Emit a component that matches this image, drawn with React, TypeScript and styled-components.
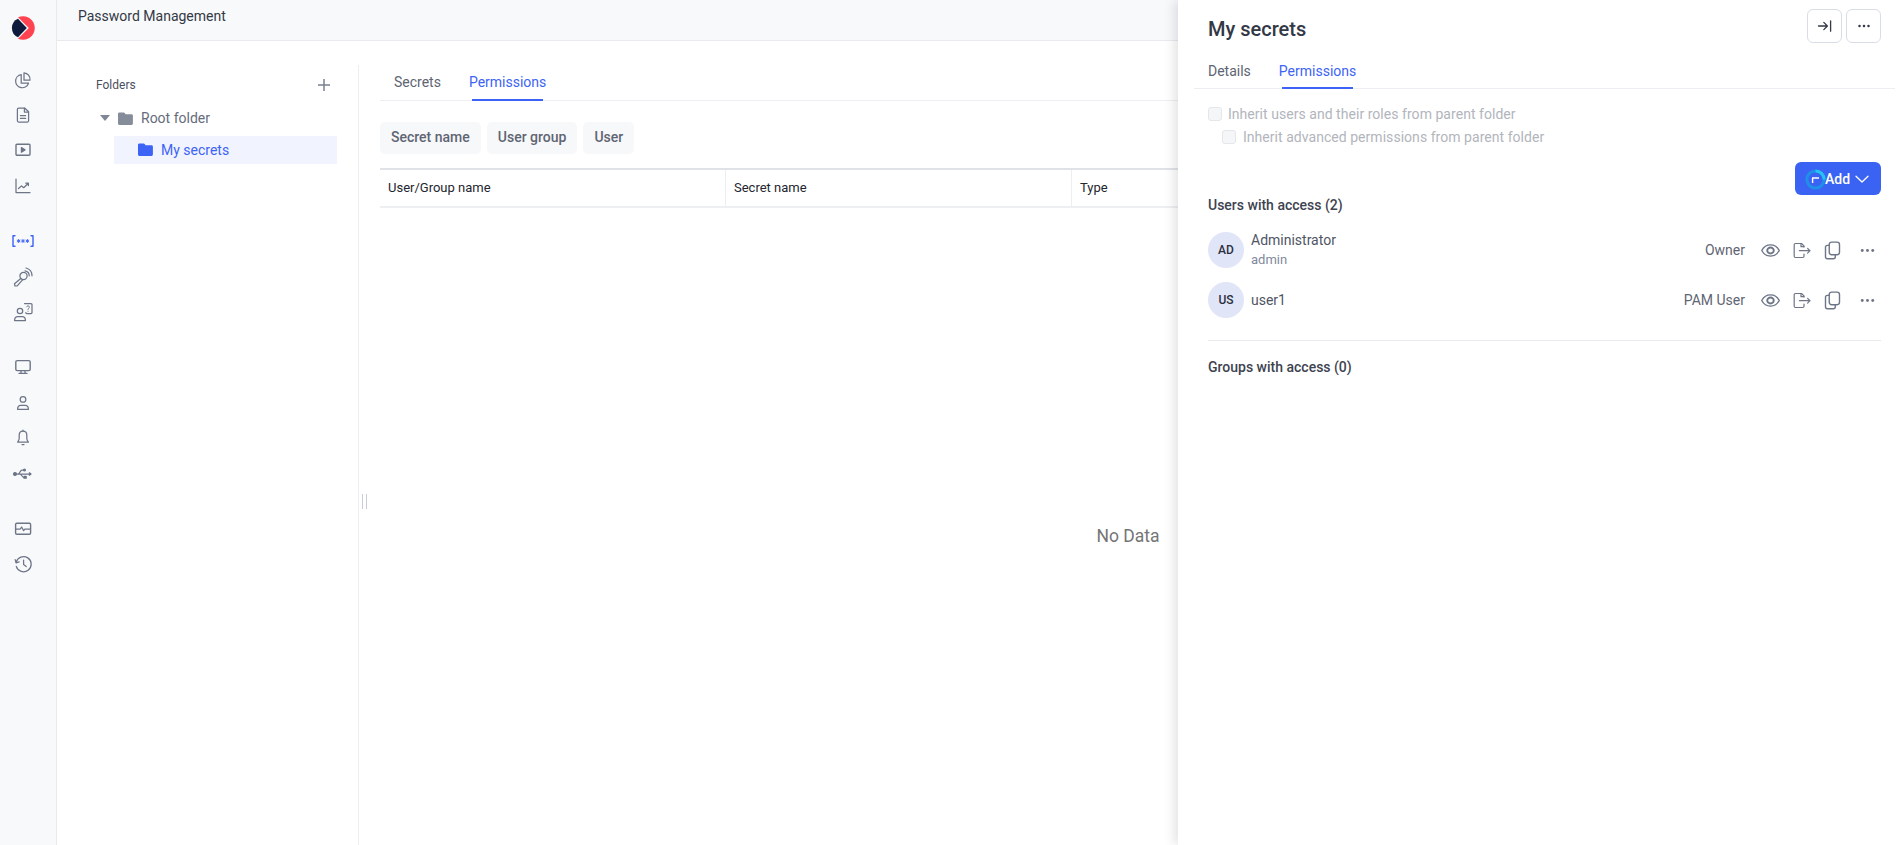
import React from "react";
import styled, { createGlobalStyle } from "styled-components";

const Global = createGlobalStyle`
  html, body { margin: 0; padding: 0; height: 100%; background: #fff; }
  body { font-family: Roboto, "Liberation Sans", sans-serif; overflow: hidden; }
  #root { height: 100%; }
  * { box-sizing: border-box; }
`;

const Page = styled.div`
  position: relative;
  display: flex;
  width: 1899px;
  height: 845px;
  overflow: hidden;
  background: #fff;
`;

const Sidebar = styled.nav`
  flex: 0 0 57px;
  display: flex;
  flex-direction: column;
  align-items: center;
  padding: 16px 11px 0 0;
  background: #f8f9fb;
  border-right: 1px solid #e8eaee;
`;

const Logo = styled.svg`
  width: 24px;
  height: 24px;
  margin-bottom: 22px;
`;

const NavGroup = styled.div`
  display: flex;
  flex-direction: column;
  align-items: center;
  width: 100%;
  margin-bottom: 20px;
`;

const NavSlot = styled.div<{ $active?: boolean }>`
  height: 35.4px;
  width: 100%;
  display: flex;
  align-items: center;
  justify-content: center;
  color: ${(p) => (p.$active ? "#3d63f6" : "#6d7587")};
`;

const NavIcon = styled.svg`
  width: 20px;
  height: 20px;
  fill: none;
  stroke: currentColor;
  stroke-width: 1.25;
  stroke-linecap: round;
  stroke-linejoin: round;
`;

const WideNavIcon = styled(NavIcon)`
  width: 24px;
`;

const Main = styled.div`
  flex: 1;
  display: flex;
  flex-direction: column;
  min-width: 0;
`;

const Header = styled.header`
  flex: 0 0 41px;
  display: flex;
  align-items: flex-start;
  padding: 8px 0 0 21px;
  background: #f8f9fb;
  border-bottom: 1px solid #e8eaee;
  font-size: 14px;
  line-height: 16px;
  color: #333845;
`;

const Body = styled.div`
  flex: 1;
  display: flex;
  padding-top: 24px;
  min-height: 0;
`;

const FolderPanel = styled.aside`
  flex: 0 0 302px;
  padding: 12px 21px 0 39px;
  border-right: 1px solid #eceef1;
`;

const FolderHead = styled.div`
  display: flex;
  align-items: center;
  justify-content: space-between;
  height: 16px;
  padding-right: 7px;
  font-size: 12px;
  color: #4a5060;
`;

const PlusIcon = styled.svg`
  width: 14px;
  height: 14px;
  stroke: #7a8190;
  stroke-width: 1.5;
  fill: none;
  margin-right: -1px;
`;

const Tree = styled.div`
  margin-top: 11px;
`;

const TreeRow = styled.div<{ $selected?: boolean }>`
  display: flex;
  align-items: center;
  height: 28px;
  margin-left: ${(p) => (p.$selected ? "18px" : "4px")};
  padding-left: ${(p) => (p.$selected ? "24px" : "0")};
  padding-bottom: ${(p) => (p.$selected ? "1px" : "0")};
  margin-bottom: ${(p) => (p.$selected ? "0" : "4px")};
  background: ${(p) => (p.$selected ? "#f1f4fe" : "transparent")};
  color: ${(p) => (p.$selected ? "#3d63f6" : "#656c7b")};
  font-size: 14px;
`;

const Caret = styled.span`
  width: 0;
  height: 0;
  border-left: 5px solid transparent;
  border-right: 5px solid transparent;
  border-top: 6px solid #808796;
  margin-right: 8px;
`;

const FolderIcon = styled.svg<{ $tone: string }>`
  width: 15px;
  height: 13px;
  margin-right: 8px;
  fill: ${(p) => p.$tone};
`;

const Content = styled.section`
  position: relative;
  flex: 1;
  display: flex;
  flex-direction: column;
  padding: 0 23px 0 21px;
  min-width: 0;
`;

const Handle = styled.div`
  position: absolute;
  left: 3px;
  top: 429px;
  width: 5px;
  height: 15px;
  border-left: 1px solid #c9ced6;
  border-right: 1px solid #c9ced6;
`;

const TabBar = styled.div<{ $gap: number; $pad: number }>`
  display: flex;
  gap: ${(p) => p.$gap}px;
  padding-left: ${(p) => p.$pad}px;
  border-bottom: 1.5px solid #eceef2;
`;

const Tab = styled.div<{ $active?: boolean }>`
  position: relative;
  font-size: 14px;
  line-height: 16px;
  color: ${(p) => (p.$active ? "#3d63f6" : "#5d6472")};
  &::after {
    content: "";
    position: absolute;
    left: 3px;
    right: 3px;
    bottom: -1px;
    height: 2px;
    background: ${(p) => (p.$active ? "#3d63f6" : "transparent")};
  }
`;

const MainTabs = styled(TabBar)`
  height: 36px;
  padding-top: 9px;
`;

const Filters = styled.div`
  display: flex;
  gap: 6px;
  margin-top: 21px;
`;

const Chip = styled.div`
  height: 32px;
  padding: 0 11px 2px;
  display: flex;
  align-items: center;
  background: #f7f8fa;
  border-radius: 5px;
  font-size: 14px;
  font-weight: 500;
  color: #5f6573;
`;

const TableHead = styled.div`
  display: grid;
  grid-template-columns: 345px 346px 1fr;
  height: 40px;
  margin-top: 14px;
  border-top: 2px solid #dfe2e7;
  border-bottom: 2px solid #edeff2;
`;

const HeadCell = styled.div`
  display: flex;
  align-items: center;
  padding: 0 0 2px 8px;
  font-size: 13px;
  color: #23262e;
  & + & {
    border-left: 1px solid #eceef1;
  }
`;

const Empty = styled.div`
  flex: 1;
  display: flex;
  align-items: center;
  justify-content: center;
  padding-top: 19px;
  font-size: 17.5px;
  color: #757575;
`;

const Drawer = styled.aside`
  position: absolute;
  top: 0;
  right: 0;
  bottom: 0;
  width: 721px;
  display: flex;
  flex-direction: column;
  padding: 9px 4px 0 16px;
  background: #fff;
  box-shadow: -4px 0 10px rgba(30, 35, 50, 0.12);
`;

const DrawerTop = styled.div`
  display: flex;
  justify-content: space-between;
  align-items: flex-start;
  height: 47px;
  padding: 0 14px;
`;

const DrawerTitle = styled.h1`
  margin: 8px 0 0;
  font-size: 20px;
  line-height: 24px;
  font-weight: 500;
  color: #333845;
`;

const SquareButtons = styled.div`
  display: flex;
  gap: 4px;
`;

const SquareButton = styled.div`
  width: 35px;
  height: 34px;
  display: flex;
  align-items: center;
  justify-content: center;
  border: 1px solid #d9dde6;
  border-radius: 6px;
  background: #fff;
  color: #333845;
`;

const ActionIcon = styled.svg`
  width: 18px;
  height: 18px;
  fill: none;
  stroke: currentColor;
  stroke-width: 1.3;
  stroke-linecap: round;
  stroke-linejoin: round;
`;

const RowIcon = styled(ActionIcon)`
  width: 21px;
  height: 21px;
  stroke-width: 1.2;
`;

const DrawerTabs = styled(TabBar)`
  height: 33px;
  border-bottom-width: 1px;
  padding-top: 7px;
`;

const DrawerBody = styled.div`
  flex: 1;
  display: flex;
  flex-direction: column;
  padding: 16px 14px 0;
`;

const CheckRow = styled.label<{ $indent?: boolean }>`
  display: flex;
  align-items: center;
  gap: ${(p) => (p.$indent ? "8px" : "7px")};
  height: 18px;
  margin-left: ${(p) => (p.$indent ? "14px" : "0")};
  margin-top: ${(p) => (p.$indent ? "5px" : "0")};
  font-size: 14px;
  letter-spacing: 0.04px;
  color: #b2b5bc;
`;

const CheckBox = styled.span`
  width: 14px;
  height: 14px;
  margin-right: -1px;
  background: #f5f6f8;
  border: 1px solid #e4e6eb;
  border-radius: 3px;
`;

const AddRow = styled.div`
  display: flex;
  justify-content: flex-end;
  margin-top: 16px;
`;

const AddButton = styled.div`
  position: relative;
  width: 86px;
  height: 33px;
  display: flex;
  align-items: center;
  padding-left: 30px;
  gap: 3px;
  background: #3b63f3;
  border-radius: 6px;
  color: #fff;
  font-size: 14px;
  font-weight: 500;
`;

const BusyMark = styled.svg`
  position: absolute;
  left: 10px;
  top: 7px;
  width: 21px;
  height: 21px;
`;

const SectionTitle = styled.div`
  font-size: 14px;
  line-height: 16px;
  font-weight: 500;
  color: #3e4350;
`;

const UsersTitle = styled(SectionTitle)`
  margin-top: 2px;
`;

const UserList = styled.div`
  display: flex;
  flex-direction: column;
  gap: 14px;
  margin-top: 19px;
  padding-bottom: 22px;
  border-bottom: 1px solid #e9ebef;
`;

const UserRow = styled.div`
  display: flex;
  align-items: center;
  height: 36px;
`;

const Avatar = styled.div`
  flex: 0 0 36px;
  height: 36px;
  display: flex;
  align-items: center;
  justify-content: center;
  border-radius: 50%;
  background: #e1e5f8;
  color: #2b3040;
  font-size: 12px;
  font-weight: 500;
`;

const UserText = styled.div`
  flex: 1;
  margin-left: 7px;
  display: flex;
  flex-direction: column;
`;

const UserName = styled.div`
  font-size: 14px;
  line-height: 17px;
  color: #4f5564;
`;

const UserLogin = styled.div`
  margin-top: 3px;
  font-size: 13px;
  line-height: 16px;
  color: #818a9c;
`;

const Role = styled.div`
  font-size: 14px;
  color: #5f6573;
  margin-right: 2px;
`;

const RowActions = styled.div`
  display: flex;
  align-items: center;
  color: #6d7587;
`;

const RowAction = styled.div<{ $w: number }>`
  width: ${(p) => p.$w}px;
  display: flex;
  justify-content: center;
`;

const GroupsTitle = styled(SectionTitle)`
  margin-top: 18px;
`;

const Nav = ({ d, active }: { d: React.ReactNode; active?: boolean }) => (
  <NavSlot $active={active}>
    <NavIcon viewBox="0 0 20 20">{d}</NavIcon>
  </NavSlot>
);

const Folder = ({ tone }: { tone: string }) => (
  <FolderIcon $tone={tone} viewBox="0 0 15 13">
    <path d="M1.4 0.5h4.2c.5 0 .8.2 1.1.6l.8 1.2h6c.8 0 1.4.6 1.4 1.4v7.9c0 .8-.6 1.4-1.4 1.4H1.4c-.8 0-1.4-.6-1.4-1.4V1.9C0 1.1.6.5 1.4.5z" />
  </FolderIcon>
);

const eyeArt = (
  <>
    <path d="M1.5 9C3.2 5.8 5.9 4.2 9 4.2s5.8 1.6 7.5 4.8c-1.7 3.2-4.4 4.8-7.5 4.8S3.2 12.2 1.5 9z" />
    <ellipse cx="9" cy="9" rx="2.8" ry="2.6" strokeWidth="1.6" />
  </>
);

const exportArt = (
  <>
    <path d="M11 5.5V4.4L8.5 2H2.4C1.7 2 1.2 2.5 1.2 3.2v11.6c0 .7.5 1.2 1.2 1.2h7.4c.7 0 1.2-.5 1.2-1.2v-2.3" />
    <path d="M8 2.2v3h3" />
    <path d="M6.4 9.2H17M14.6 6.8 17 9.2l-2.4 2.4" />
  </>
);

const copyArt = (
  <>
    <rect x="6.2" y="1.8" width="8.8" height="10.8" rx="2" />
    <path d="M6 4.6H4.6C3.6 4.6 3 5.3 3 6.2v8.2c0 .9.7 1.7 1.7 1.7h5c1 0 1.7-.7 1.7-1.7v-1.6" />
  </>
);

const dotsArt = (
  <>
    <circle cx="4.5" cy="9" r="1.25" fill="currentColor" stroke="none" />
    <circle cx="9" cy="9" r="1.25" fill="currentColor" stroke="none" />
    <circle cx="13.5" cy="9" r="1.25" fill="currentColor" stroke="none" />
  </>
);

const Star = ({ x }: { x: number }) => (
  <path
    d={`M${x} 8.4v3.2M${x - 1.4} 9.2l2.8 1.6M${x - 1.4} 10.8l2.8-1.6`}
    strokeWidth="0.9"
  />
);

const users = [
  { initials: "AD", name: "Administrator", login: "admin", role: "Owner" },
  { initials: "US", name: "user1", login: "", role: "PAM User" },
];

export default function App() {
  return (
    <Page>
      <Global />
      <Sidebar>
        <Logo viewBox="0 0 24 24">
          <path d="M7 1.3A11.8 11.8 0 1 1 7 22.7L17.8 12Z" fill="#ff4351" />
          <path d="M7 2.8 15.8 12 7 21.2A10 10 0 0 1 7 2.8Z" fill="#0f1b3d" />
        </Logo>
        <NavGroup>
          <Nav d={<><path d="M8.2 4.6a6.6 6.6 0 1 0 7.3 8.6H8.2V4.6Z" /><path d="M11 2.8a6.6 6.6 0 0 1 6 7.4h-6V2.8Z" /></>} />
          <Nav d={<><path d="M11.6 3H5.6C4.9 3 4.4 3.5 4.4 4.2v11.6c0 .7.5 1.2 1.2 1.2h8.8c.7 0 1.2-.5 1.2-1.2V6.8L11.6 3Z" /><path d="M11.4 3.2v3.8h4" /><path d="M7.4 10.6h5.2M7.4 13.4h5.2" /></>} />
          <Nav d={<><rect x="3" y="4.2" width="14" height="11" rx="1" strokeWidth="1.4" /><path d="M8.4 7.6v4.6l3.6-2.3z" fill="currentColor" /></>} />
          <Nav d={<><path d="M3 3v13.5h14" /><path d="M5.5 12.5l3-2.6 2.2 1.8 4.6-4.4M12.8 7.2h2.6v2.4" /></>} />
        </NavGroup>
        <NavGroup>
          <NavSlot $active>
            <WideNavIcon viewBox="0 0 24 20">
              <path d="M4 4.8H2v10.4h2M20 4.8h2v10.4h-2" strokeWidth="1.4" />
              <Star x={7.6} />
              <Star x={12} />
              <Star x={16.4} />
            </WideNavIcon>
          </NavSlot>
          <Nav d={<><circle cx="10.5" cy="9" r="3.6" /><path d="M7.8 11.5 1.5 16.8l.5 2.2 2.2-.2 5.6-6.2" /><path d="M12 3.8a5 5 0 0 1 4.2 5M13 1a8 8 0 0 1 6 7.8" /></>} />
          <Nav d={<><circle cx="7" cy="9" r="2.7" /><path d="M1.6 18.6c0-2.6 1.4-4 3-4h4.8c1.6 0 3 1.4 3 4Z" /><path d="M11.5 1.5h6.5a1 1 0 0 1 1 1v8a1 1 0 0 1-1 1h-4.2a1 1 0 0 1-1-1" /><path d="M13.6 4.8c.5-1.4 2.8-1.2 2.8.3 0 1-1.3 1.1-1.4 2.3M15 9.2v.1" strokeWidth="1" /></>} />
        </NavGroup>
        <NavGroup>
          <Nav d={<><rect x="2.8" y="3.6" width="14.4" height="10" rx="1.4" strokeWidth="1.4" /><path d="M8 13.6v2.6M12 13.6v2.6M6 16.4h8" /></>} />
          <Nav d={<><circle cx="10" cy="6.4" r="2.8" /><path d="M4.6 16.4c0-2.6 1.4-4 3.2-4h4.4c1.8 0 3.2 1.4 3.2 4Z" /></>} />
          <Nav d={<><path d="M10 3.2c-2.4 0-3.8 1.8-3.8 4v3.2c0 1.4-.7 2.4-1.6 3.6h10.8c-.9-1.2-1.6-2.2-1.6-3.6V7.2c0-2.2-1.4-4-3.8-4Z" /><path d="M10 2v1.2M9 16.6h2" /></>} />
          <NavSlot>
            <NavIcon viewBox="0 0 20 20">
              <circle cx="2" cy="10" r="1.4" fill="currentColor" />
              <path d="M2 10h15M5 10c2 0 2-4 4-4h1.6M7 10c1.6 0 1.8 3.4 3.8 3.4" />
              <circle cx="11.5" cy="6" r=".9" fill="currentColor" />
              <rect x="11" y="12.4" width="2.2" height="1.8" fill="currentColor" />
              <path d="M16.4 8.8 18 10l-1.6 1.2z" fill="currentColor" />
            </NavIcon>
          </NavSlot>
        </NavGroup>
        <NavGroup>
          <Nav d={<><rect x="2.6" y="4.2" width="15" height="11" rx="1.2" strokeWidth="1.4" /><path d="M2.8 10h4.4l1.4-2 2 3.6 1.2-1.6h5.6" /></>} />
          <Nav d={<><path d="M3.2 8.4a7.6 7.6 0 1 1 .1 4" /><path d="M2.2 5.6l.9 3.2 3-.9" /><path d="M10.6 6v4.6l2.6 2" /></>} />
        </NavGroup>
      </Sidebar>
      <Main>
        <Header>Password Management</Header>
        <Body>
          <FolderPanel>
            <FolderHead>
              Folders
              <PlusIcon viewBox="0 0 14 14">
                <path d="M7 1v12M1 7h12" />
              </PlusIcon>
            </FolderHead>
            <Tree>
              <TreeRow>
                <Caret />
                <Folder tone="#858c9a" />
                Root folder
              </TreeRow>
              <TreeRow $selected>
                <Folder tone="#3d63f6" />
                My secrets
              </TreeRow>
            </Tree>
          </FolderPanel>
          <Content>
            <Handle />
            <MainTabs $gap={28} $pad={14}>
              <Tab>Secrets</Tab>
              <Tab $active>Permissions</Tab>
            </MainTabs>
            <Filters>
              <Chip>Secret name</Chip>
              <Chip>User group</Chip>
              <Chip>User</Chip>
            </Filters>
            <TableHead>
              <HeadCell>User/Group name</HeadCell>
              <HeadCell>Secret name</HeadCell>
              <HeadCell>Type</HeadCell>
            </TableHead>
            <Empty>No Data</Empty>
          </Content>
        </Body>
      </Main>
      <Drawer>
        <DrawerTop>
          <DrawerTitle>My secrets</DrawerTitle>
          <SquareButtons>
            <SquareButton>
              <ActionIcon viewBox="0 0 18 18" strokeWidth="1.8">
                <path d="M2.5 9h8.5M7.8 5.4 11.4 9l-3.6 3.6M14.6 3.8v10.4" />
              </ActionIcon>
            </SquareButton>
            <SquareButton>
              <ActionIcon viewBox="0 0 18 18">{dotsArt}</ActionIcon>
            </SquareButton>
          </SquareButtons>
        </DrawerTop>
        <DrawerTabs $gap={28} $pad={14}>
          <Tab>Details</Tab>
          <Tab $active>Permissions</Tab>
        </DrawerTabs>
        <DrawerBody>
          <CheckRow>
            <CheckBox />
            Inherit users and their roles from parent folder
          </CheckRow>
          <CheckRow $indent>
            <CheckBox />
            Inherit advanced permissions from parent folder
          </CheckRow>
          <AddRow>
            <AddButton>
              <BusyMark viewBox="0 0 21 21">
                <circle cx="10.5" cy="10.5" r="8.6" fill="none" stroke="#1f8fe8" strokeWidth="3" />
                <path d="M10.5 1.9a8.6 8.6 0 0 1 8.6 8.6" fill="none" stroke="#25c3f0" strokeWidth="3" />
                <path d="M7 9h7M7.6 9v5" stroke="#fff" strokeWidth="1.4" fill="none" />
              </BusyMark>
              Add
              <ActionIcon viewBox="0 0 18 18" strokeWidth="1.5">
                <path d="M3 6.2 9 12l6-5.8" />
              </ActionIcon>
            </AddButton>
          </AddRow>
          <UsersTitle>Users with access (2)</UsersTitle>
          <UserList>
            {users.map((u) => (
              <UserRow key={u.initials}>
                <Avatar>{u.initials}</Avatar>
                <UserText>
                  <UserName>{u.name}</UserName>
                  {u.login && <UserLogin>{u.login}</UserLogin>}
                </UserText>
                <Role>{u.role}</Role>
                <RowActions>
                  <RowAction $w={46}><RowIcon viewBox="0 0 18 18">{eyeArt}</RowIcon></RowAction>
                  <RowAction $w={18}><RowIcon viewBox="0 0 18 18">{exportArt}</RowIcon></RowAction>
                  <RowAction $w={42}><RowIcon viewBox="0 0 18 18">{copyArt}</RowIcon></RowAction>
                  <RowAction $w={28}><RowIcon viewBox="0 0 18 18">{dotsArt}</RowIcon></RowAction>
                </RowActions>
              </UserRow>
            ))}
          </UserList>
          <GroupsTitle>Groups with access (0)</GroupsTitle>
        </DrawerBody>
      </Drawer>
    </Page>
  );
}
